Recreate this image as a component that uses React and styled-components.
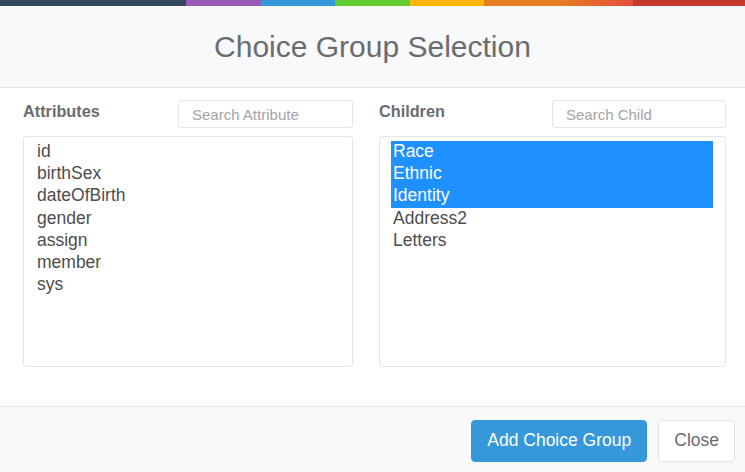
import React from "react";
import styled, { createGlobalStyle } from "styled-components";

const GlobalStyle = createGlobalStyle`
  html, body {
    margin: 0;
    padding: 0;
    background: #ffffff;
  }
  body {
    font-family: "Liberation Sans", Arial, Helvetica, sans-serif;
    overflow: hidden;
  }
  * { box-sizing: border-box; }
`;

const Modal = styled.div`
  width: 745px;
  height: 472px;
  display: flex;
  flex-direction: column;
  background: #ffffff;
  overflow: hidden;
`;

const ColorLine = styled.div`
  height: 6px;
  flex: none;
  background: linear-gradient(
    to right,
    #34495e, #34495e 25%,
    #9b59b6 25%, #9b59b6 35%,
    #3498db 35%, #3498db 45%,
    #62cb31 45%, #62cb31 55%,
    #ffb606 55%, #ffb606 65%,
    #e67e22 65%, #e67e22 75%,
    #e74c3c 85%, #c0392b 85%, #c0392b 100%
  );
`;

const Header = styled.div`
  flex: none;
  height: 82px;
  display: flex;
  align-items: center;
  justify-content: center;
  background: #f7f9fa;
  border-bottom: 1px solid #e4e5e7;
`;

const Title = styled.h4`
  margin: 0;
  font-size: 30px;
  font-weight: 400;
  color: #6a6c6f;
  line-height: normal;
`;

const Body = styled.div`
  flex: none;
  height: 318px;
  padding: 12px 19px 0 23px;
  display: grid;
  grid-template-columns: 330px 347px;
  column-gap: 26px;
  align-content: start;
`;

const Column = styled.div`
  display: flex;
  flex-direction: column;
  gap: 8px;
`;

const ColumnHead = styled.div`
  display: flex;
  justify-content: space-between;
  align-items: flex-start;
  height: 28px;
`;

const Label = styled.div`
  font-size: 16.25px;
  font-weight: 700;
  line-height: 23px;
  color: #6a6c6f;
`;

const Search = styled.input`
  width: ${(p) => p.$w}px;
  height: 28px;
  border: 1px solid #e4e5e7;
  border-radius: 3px;
  padding: 0 10px 0 13px;
  font-family: inherit;
  font-size: 15px;
  color: #6a6c6f;
  background: #ffffff;
  outline: none;
  &::placeholder {
    color: #a5a5a5;
  }
`;

const ListBox = styled.div`
  height: 231px;
  border: 1px solid #e4e5e7;
  border-radius: 3px;
  padding: 4px 12px 4px 11px;
  background: #ffffff;
  overflow: hidden;
`;

const Option = styled.div`
  font-size: 17.5px;
  line-height: 21.2px;
  padding: 0 2px 1px;
  white-space: nowrap;
  color: ${(p) => (p.$selected ? "#ffffff" : "#4d4d4d")};
  background: ${(p) => (p.$selected ? "#1e90ff" : "transparent")};
`;

const Footer = styled.div`
  flex: 1;
  display: flex;
  justify-content: flex-end;
  align-items: flex-start;
  gap: 11px;
  padding: 13px 10px 0 0;
  background: #f7f9fa;
  border-top: 1px solid #e4e5e7;
`;

const Button = styled.button`
  height: 42px;
  padding: 0 15px 2px;
  font-family: inherit;
  font-size: 17.5px;
  line-height: 38px;
  border-radius: 4px;
  cursor: pointer;
  border: 1px solid ${(p) => (p.$primary ? "#3498db" : "#e4e5e7")};
  background: ${(p) => (p.$primary ? "#3498db" : "#ffffff")};
  color: ${(p) => (p.$primary ? "#ffffff" : "#6a6c6f")};
`;

const attributes = ["id", "birthSex", "dateOfBirth", "gender", "assign", "member", "sys"];
const children = [
  { name: "Race", selected: true },
  { name: "Ethnic", selected: true },
  { name: "Identity", selected: true },
  { name: "Address2", selected: false },
  { name: "Letters", selected: false },
];

export default function App() {
  return (
    <>
      <GlobalStyle />
      <Modal>
        <ColorLine />
        <Header>
          <Title>Choice Group Selection</Title>
        </Header>
        <Body>
          <Column>
            <ColumnHead>
              <Label>Attributes</Label>
              <Search $w={175} placeholder="Search Attribute" />
            </ColumnHead>
            <ListBox>
              {attributes.map((a) => (
                <Option key={a}>{a}</Option>
              ))}
            </ListBox>
          </Column>
          <Column>
            <ColumnHead>
              <Label>Children</Label>
              <Search $w={174} placeholder="Search Child" />
            </ColumnHead>
            <ListBox>
              {children.map((c) => (
                <Option key={c.name} $selected={c.selected}>
                  {c.name}
                </Option>
              ))}
            </ListBox>
          </Column>
        </Body>
        <Footer>
          <Button $primary>Add Choice Group</Button>
          <Button>Close</Button>
        </Footer>
      </Modal>
    </>
  );
}
